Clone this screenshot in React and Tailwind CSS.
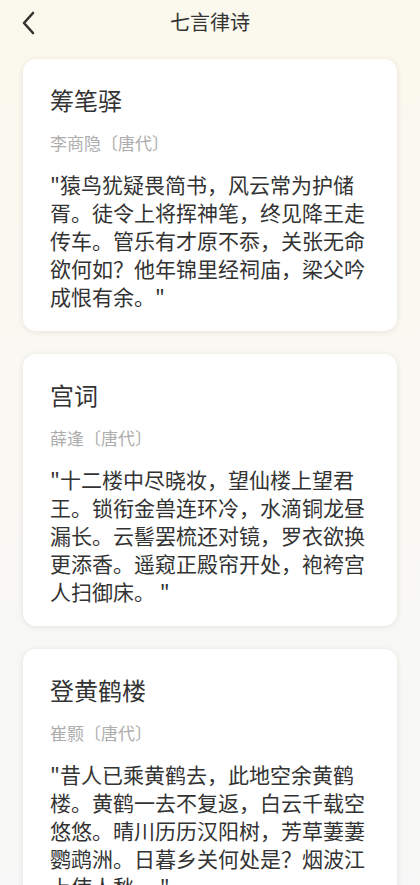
import React from "react";

const poems = [
  {
    title: "筹笔驿",
    author: "李商隐〔唐代〕",
    body: "\"猿鸟犹疑畏简书，风云常为护储胥。徒令上将挥神笔，终见降王走传车。管乐有才原不忝，关张无命欲何如？他年锦里经祠庙，梁父吟成恨有余。\"",
  },
  {
    title: "宫词",
    author: "薛逢〔唐代〕",
    body: "\"十二楼中尽晓妆，望仙楼上望君王。锁衔金兽连环冷，水滴铜龙昼漏长。云髻罢梳还对镜，罗衣欲换更添香。遥窥正殿帘开处，袍袴宫人扫御床。 \"",
  },
  {
    title: "登黄鹤楼",
    author: "崔颢〔唐代〕",
    body: "\"昔人已乘黄鹤去，此地空余黄鹤楼。黄鹤一去不复返，白云千载空悠悠。晴川历历汉阳树，芳草萋萋鹦鹉洲。日暮乡关何处是？烟波江上使人愁。 \"",
  },
];

export default function App() {
  return (
    <div
      className="min-h-[885px] w-[420px] bg-gradient-to-b from-[#fbf8ed] via-[#f9f8f3] to-[#f7f7f7] text-[#333]"
      style={{ fontFamily: '"Noto Sans CJK SC", "Noto Sans", sans-serif' }}
    >
      <div className="relative flex h-[44px] items-center justify-center">
        <div className="absolute left-[20px] top-[10px]">
          <svg width="18" height="26" viewBox="0 0 18 26" fill="none">
            <path d="M13 3 L4 13 L13 23" stroke="#333" strokeWidth="2.6" strokeLinecap="round" strokeLinejoin="round" />
          </svg>
        </div>
        <span className="text-[20px] leading-[28px] text-[#333]">七言律诗</span>
      </div>
      <div className="flex flex-col gap-[23px] px-[23px] pt-[15px] pb-[24px]">
        {poems.map((p) => (
          <div
            key={p.title}
            className="rounded-[13px] bg-white px-[27px] pt-[26px] pb-[21px] shadow-[0_1px_6px_rgba(0,0,0,0.09)]"
          >
            <div className="text-[24px] leading-[30px] text-[#333]">{p.title}</div>
            <div className="mt-[16px] text-[17px] leading-[24px] text-[#adadad]">{p.author}</div>
            <div className="mt-[15px] text-[21px] leading-[28px] text-[#333]">{p.body}</div>
          </div>
        ))}
      </div>
    </div>
  );
}
